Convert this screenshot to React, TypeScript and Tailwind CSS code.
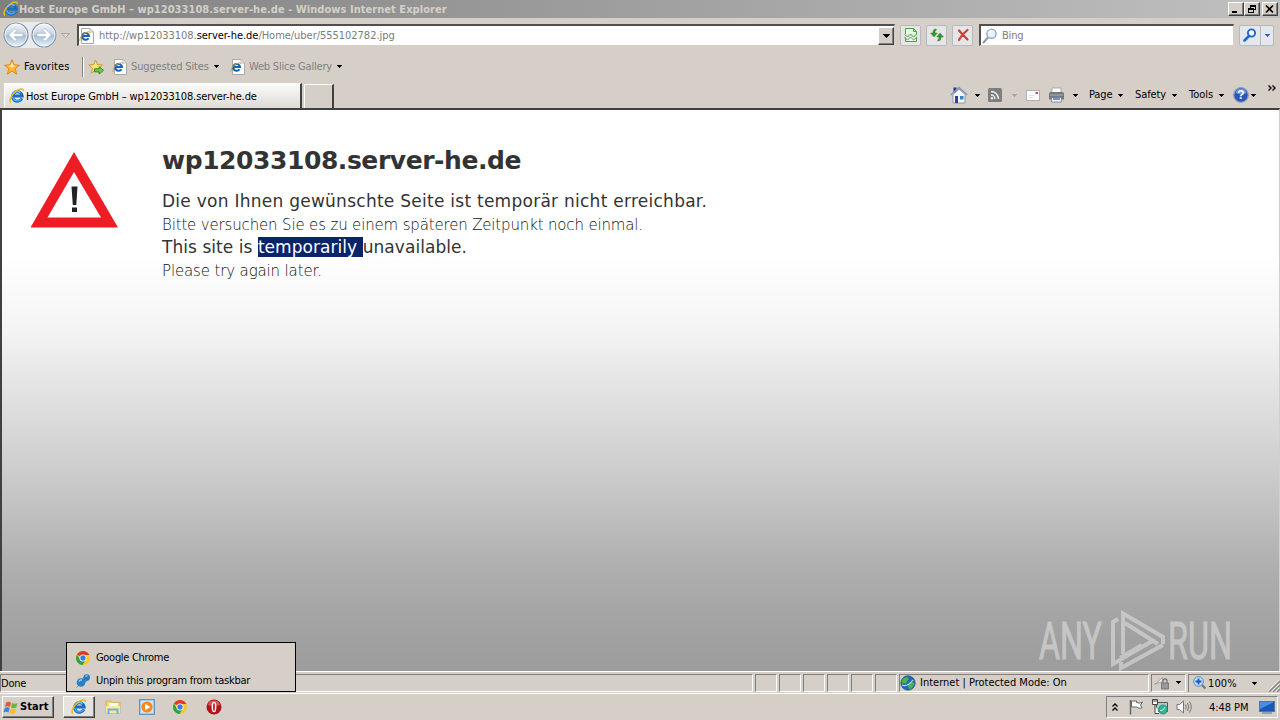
import { ReactNode } from 'react';

const ui = 'font-["DejaVu_Sans_Condensed","DejaVu_Sans",sans-serif] [font-stretch:condensed]';

interface IconProps {
  className?: string;
}

function IeLogo({ className = 'w-4 h-4' }: IconProps) {
  return (
    <svg viewBox="0 0 16 16" className={className} fill="none">
      <path d="M12.900 10.200A4.800 4.800 0 1 1 13.200 8H4.500" stroke="#1c6cc6" strokeWidth="3" />
      <path d="M12.300 10.600A4.800 4.800 0 0 1 3.600 9" stroke="#3fabf0" strokeWidth="1.500" />
      <path d="M4.200 5.800A4.800 4.800 0 0 1 11.500 4.600" stroke="#62c4f8" strokeWidth="1.500" />
      <path d="M2 14.500C-.6 13.500 2.200 6.500 7.200 3c3.800-2.600 7.600-2.900 7.200.2" stroke="#e8bb20" strokeWidth="1.500" />
    </svg>
  );
}

function IePage() {
  return (
    <svg viewBox="0 0 16 16" className="w-4 h-4 shrink-0" fill="none">
      <path d="M2.500.5h8.500l3.500 3.500v11.500h-12z" fill="#fff" stroke="#a9a9a9" />
      <path d="M11 .5V4h3.500" stroke="#bbb" />
      <path d="M9.500 10.200A3.400 3.400 0 1 1 10 8H4" stroke="#1b62b5" strokeWidth="2.100" />
      <path d="M1 13C0 11 3 6.500 6 5c3-1.600 5-1.700 5 0" stroke="#d9ac27" />
    </svg>
  );
}

function Chrome({ className = 'w-4 h-4' }: IconProps) {
  return (
    <svg viewBox="0 0 16 16" className={className}>
      <circle cx="8" cy="8" r="7" fill="#fbc91f" />
      <path d="M8 8 1.940 4.500A7 7 0 0 1 14.060 4.500L14.400 5H8z" fill="#e0392b" />
      <path d="M1.940 4.500A7 7 0 0 0 7.500 15L11 9.500 8 8 5 9.500z" fill="#2ba24c" />
      <circle cx="8" cy="8" r="3.500" fill="#fff" />
      <circle cx="8" cy="8" r="2.700" fill="#3b7de8" />
    </svg>
  );
}

function Caret({ className = 'text-black' }: IconProps) {
  return (
    <svg viewBox="0 0 5 3" className={`w-[5px] h-[3px] shrink-0 ${className}`} shapeRendering="crispEdges">
      <path d="M0 0h5v1H0zM1 1h3v1H1zM2 2h1v1H2z" fill="currentColor" />
    </svg>
  );
}

function Star() {
  return (
    <svg viewBox="0 0 16 16" className="w-4 h-4 shrink-0">
      <path d="m8 .8 2.100 5 5.300.4-4.100 3.500 1.300 5.300L8 12.200 3.400 15l1.300-5.300L.6 6.200l5.300-.4z" fill="#fdb827" stroke="#d9801a" strokeWidth=".9" />
      <path d="m8 3 1.200 3.600 3 .4L8 8.500 4 7l2.700-.5z" fill="#fff0a0" />
    </svg>
  );
}

function StarAdd() {
  return (
    <svg viewBox="0 0 16 16" className="w-4 h-4 shrink-0">
      <path d="m7.500 1 2 4.500 5 .5-3.800 3.300 1 5-4.200-2.700L3.400 14l1.100-4.700L.8 6l4.900-.5z" fill="#ffe274" stroke="#c6962b" strokeWidth=".9" />
      <path d="M6.500 9.800h4.700V7.700l4.300 3.600-4.300 3.700v-2.200H6.500z" fill="#6fd046" stroke="#238522" strokeWidth=".9" />
    </svg>
  );
}

function NavCircle({ forward }: { forward?: boolean }) {
  return (
    <svg viewBox="0 0 26 26" className="w-[26px] h-[26px] shrink-0">
      <defs>
        <linearGradient id={forward ? 'navF' : 'navB'} x1="0" y1="0" x2="0" y2="1">
          <stop offset="0" stopColor="#f4f7fa" />
          <stop offset=".48" stopColor="#c4d2e2" />
          <stop offset=".52" stopColor="#a9bed6" />
          <stop offset="1" stopColor="#e6f4fd" />
        </linearGradient>
      </defs>
      <circle cx="13" cy="13" r="12" fill={`url(#${forward ? 'navF' : 'navB'})`} stroke="#8493a5" strokeWidth="1.200" />
      <circle cx="13" cy="13" r="10.900" fill="none" stroke="#fff" strokeOpacity=".7" />
      <path
        d="M5.500 13l6.500-6.500 2 2-2.700 2.800h8.700v3.400h-8.700l2.700 2.800-2 2z"
        fill="#fff"
        stroke="#8fa5bd"
        strokeWidth=".6"
        transform={forward ? 'matrix(-1 0 0 1 26 0)' : undefined}
      />
    </svg>
  );
}

function ToolButton({ children }: { children: ReactNode }) {
  return (
    <div className="w-[21px] h-[21px] shrink-0 flex items-center justify-center bg-[#e6e6e6] border border-[#b4bac2] rounded-[2px]">
      {children}
    </div>
  );
}

function WinButton({ children }: { children: ReactNode }) {
  return (
    <div className="w-4 h-[14px] bg-[#d5cfc8] border border-t-white border-l-white border-r-[#404040] border-b-[#404040] shadow-[inset_-1px_-1px_0_#808080] flex items-center justify-center">
      <svg viewBox="0 0 12 10" className="w-3 h-[10px]" fill="none" stroke="#000" shapeRendering="crispEdges">
        {children}
      </svg>
    </div>
  );
}

function TitleBar() {
  return (
    <div className="h-[18px] flex items-center bg-linear-to-r from-[#808080] to-[#c0c0c0] pl-[3px] pr-[2px]">
      <IeLogo className="w-4 h-4 mb-px" />
      <span className="font-['DejaVu_Sans_Condensed','DejaVu_Sans',sans-serif] font-bold text-[11px] leading-[18px] text-[#d4d0c8] tracking-[0.05px] pt-px whitespace-nowrap">
        Host Europe GmbH – wp12033108.server-he.de - Windows Internet Explorer
      </span>
      <div className="ml-auto flex">
        <WinButton><path d="M2 7.500h5M2 8.500h5" /></WinButton>
        <WinButton>
          <path d="M4 1h6M4 2h6M9.500 1v5M4.500 1v3M8 5.500h2M2 4h6M2 5h6M2.500 4v5M7.500 4v5M2 8.500h6" />
        </WinButton>
        <div className="ml-[2px]">
          <WinButton><path d="M2 1.500l7 7M9 1.500l-7 7" strokeWidth="1.600" shapeRendering="auto" /></WinButton>
        </div>
      </div>
    </div>
  );
}

function AddressRow() {
  return (
    <div className="h-[34px] flex items-center pl-[3px] pr-[5px]">
      <div className="flex gap-[2px] rounded-full bg-[#e9ecef]">
        <NavCircle />
        <NavCircle forward />
      </div>
      <svg viewBox="0 0 9 5" className="w-[9px] h-[5px] ml-[4px] mr-[7px] shrink-0">
        <path d="M.5.5h8l-4 4z" fill="#ddd9d2" stroke="#aaa69f" />
      </svg>
      <div className="w-[818px] h-[22px] shrink-0 flex items-center bg-white border-t-2 border-l-2 border-t-[#505050] border-l-[#505050] border-b border-r border-b-[#d4d0c8] border-r-[#d4d0c8]">
        <IePage />
        <span className={`${ui} text-[11px] text-[#7c7c7c] ml-[4px] pt-[2px] tracking-[-0.03px] whitespace-nowrap`}>
          http://wp12033108.<span className="text-black">server-he.de</span>/Home/uber/555102782.jpg
        </span>
        <div className="ml-auto w-4 h-[18px] bg-[#d5cfc8] border border-t-white border-l-white border-r-[#404040] border-b-[#404040] shadow-[inset_-1px_-1px_0_#808080] flex items-center justify-center">
          <svg viewBox="0 0 7 4" className="w-[7px] h-1" shapeRendering="crispEdges">
            <path d="M0 0h7v1H0zM1 1h5v1H1zM2 2h3v1H2zM3 3h1v1H3z" />
          </svg>
        </div>
      </div>
      <div className="flex gap-[5px] ml-[5px]">
        <ToolButton>
          <svg viewBox="0 0 16 16" className="w-4 h-4" fill="none" stroke="#46a046">
            <path d="M2.500 7V1.500h8l3 3V7M10.500 1.500v3h3M2.500 10.500v4h11v-4" fill="#f0f8ee" />
            <path d="m1.500 7.500 3 2.500 3-3 3 3 3.500-3M1.500 10.500l3 2.500 3-3 3 3 3.500-3" />
          </svg>
        </ToolButton>
        <ToolButton>
          <svg viewBox="0 0 16 16" className="w-4 h-4" fill="#319a2c" stroke="#1d7a1d" strokeWidth=".4">
            <path d="M7 2C4.500 2 4 3.500 4 6H1.500L5 10l3.300-4H6C6 4.500 6 3.500 7.500 3z" />
            <path d="M9 14c2.500 0 3-1.500 3-4h2.500L11 6 7.700 10H10c0 1.500 0 2.500-1.500 3z" />
          </svg>
        </ToolButton>
        <ToolButton>
          <svg viewBox="0 0 16 16" className="w-4 h-4" fill="none" strokeLinecap="round">
            <path d="M4 3.500c2 2.500 5 5 8.500 9M12.500 3C9 6 6 9 4 13" stroke="#c8413d" strokeWidth="2.200" />
          </svg>
        </ToolButton>
      </div>
      <div className="w-[255px] h-[22px] ml-[6px] shrink-0 flex items-center bg-white border-t-2 border-l-2 border-t-[#505050] border-l-[#505050] border-b border-r border-b-[#d4d0c8] border-r-[#d4d0c8]">
        <svg viewBox="0 0 16 16" className="w-4 h-4 ml-px" fill="none">
          <path d="m6 9.500-4.500 5" stroke="#8e9aa6" strokeWidth="2" strokeLinecap="round" />
          <circle cx="9.500" cy="5.700" r="4.600" fill="#e4f3fc" stroke="#92aabd" strokeWidth="1.400" />
          <path d="M7 5.500c.5-2 2-2.500 3.500-2.300" stroke="#fff" strokeWidth="1.300" />
        </svg>
        <span className={`${ui} text-[11px] text-[#7c7c7c] ml-[4px] pt-[2px] tracking-[-0.2px]`}>Bing</span>
      </div>
      <div className="w-[35px] h-[21px] ml-[5px] shrink-0 flex bg-[#e4e7ec] border border-[#b4bac2] rounded-[2px]">
        <div className="flex-1 flex items-center justify-center">
          <svg viewBox="0 0 14 14" className="w-[14px] h-[14px]" fill="none" stroke="#2366c9">
            <path d="m5.500 8.500-4 4" strokeWidth="2.500" strokeLinecap="round" />
            <circle cx="8.500" cy="5" r="3.600" strokeWidth="1.900" fill="#f2f8ff" />
          </svg>
        </div>
        <div className="w-[13px] border-l border-[#b4bac2] flex items-center justify-center">
          <Caret className="text-[#2366c9]" />
        </div>
      </div>
    </div>
  );
}

function FavoritesRow() {
  return (
    <div className={`${ui} h-[29px] flex items-center pl-1 text-[11px] whitespace-nowrap`}>
      <Star />
      <span className="ml-[4px] w-[46px] pt-px tracking-[0.1px]">Favorites</span>
      <div className="ml-[12px] w-[2px] h-5 border-l border-[#808080] border-r border-r-white" />
      <div className="ml-[4px]"><StarAdd /></div>
      <div className="ml-[8px]"><IePage /></div>
      <span className="ml-[3px] w-[78px] pt-px tracking-[-0.15px] text-[#808080]">Suggested Sites</span>
      <div className="ml-[5px]"><Caret /></div>
      <div className="ml-[11px]"><IePage /></div>
      <span className="ml-[3px] w-[83px] pt-px tracking-[-0.2px] text-[#808080]">Web Slice Gallery</span>
      <div className="ml-[5px]"><Caret /></div>
    </div>
  );
}

function CommandBar() {
  return (
    <div className={`${ui} ml-auto mb-[3px] h-5 flex items-center text-[11px] whitespace-nowrap`}>
      <svg viewBox="0 0 18 18" className="w-[18px] h-[18px]">
        <path d="M3.500 1.500h3v5h-3z" fill="#27348b" />
        <path d="M3 8.500 9 3l6 5.500V17H3z" fill="#f6f7fb" stroke="#7788aa" strokeWidth=".8" />
        <path d="M.8 9 9 1.500 17.200 9" fill="none" stroke="#8297bd" strokeWidth="1.600" />
        <path d="M5 10h3v7H5z" fill="#2d4390" />
        <path d="M10 10h3.500v3.500H10z" fill="#3288bd" />
      </svg>
      <div className="ml-[7px]"><Caret /></div>
      <svg viewBox="0 0 14 14" className="w-[14px] h-[14px] ml-[8px]" fill="none">
        <rect width="14" height="14" rx="1.500" fill="#7e7e7e" />
        <path d="M3 7a4 4 0 0 1 4 4M3 3.500A7.500 7.500 0 0 1 10.500 11" stroke="#eee" strokeWidth="1.500" />
        <circle cx="3.900" cy="10.200" r="1.200" fill="#eee" />
      </svg>
      <div className="ml-[10px]"><Caret className="text-[#aaa69f]" /></div>
      <svg viewBox="0 0 14 11" className="w-[14px] h-[11px] ml-[9px]">
        <rect x=".5" y=".5" width="13" height="10" fill="#fdfdfd" stroke="#b7aeb4" />
        <path d="M9.500 2h2.500v2H9.500z" fill="#c34a68" />
        <path d="M3 5.500h5M3 7.500h4" stroke="#ddd" />
      </svg>
      <svg viewBox="0 0 17 16" className="w-[17px] h-4 ml-[8px]">
        <path d="M4 1h9v6H4z" fill="#fff" stroke="#999" strokeWidth=".8" />
        <path d="M1 6.500Q1 5 3 5h11q2 0 2 1.500v6H1z" fill="#74777d" />
        <path d="M2 8h13" stroke="#aeb2b8" />
        <path d="M3.500 10.500h10V15h-10z" fill="#eef4fc" stroke="#787c86" strokeWidth=".8" />
        <path d="M5 12h7" stroke="#3a76c6" strokeWidth="1.500" />
      </svg>
      <div className="ml-[8px]"><Caret /></div>
      <span className="ml-[11px] w-[24px] tracking-[-0.1px]">Page</span>
      <div className="ml-[5px]"><Caret /></div>
      <span className="ml-[12px] w-[32px] tracking-[-0.1px]">Safety</span>
      <div className="ml-[5px]"><Caret /></div>
      <span className="ml-[12px] w-[25px]">Tools</span>
      <div className="ml-[5px]"><Caret /></div>
      <svg viewBox="0 0 16 16" className="w-4 h-4 ml-[9px]">
        <circle cx="8" cy="8" r="7.300" fill="#2b56b8" stroke="#8d9dc2" strokeWidth="1.300" />
        <path d="M2.500 6a5.700 5.700 0 0 1 11 0Q8 8.500 2.500 6z" fill="#6d93df" />
        <text x="8" y="12.300" textAnchor="middle" fontSize="12" fontWeight="700" fontFamily="Liberation Sans, sans-serif" fill="#fff">?</text>
      </svg>
      <div className="ml-[2px]"><Caret /></div>
      <svg viewBox="0 0 8 6" className="w-2 h-[6px] ml-[12px] mr-[4px] mb-[15px]" fill="none" stroke="#000" strokeWidth="1.400">
        <path d="m.5.5 2.500 2.500L.5 5.500M4.500.5 7 3 4.500 5.500" />
      </svg>
    </div>
  );
}

function TabRow() {
  return (
    <div className="h-[27px] flex items-end pl-1">
      <div className="w-[298px] h-[25px] flex items-center border-t border-l border-white border-r-2 border-r-[#404040] bg-linear-to-b from-[#fbfbfa] to-[#dedbd5] pl-1">
        <IeLogo />
        <span className={`${ui} text-[11px] ml-[1px] pt-[2px] tracking-[-0.12px] whitespace-nowrap`}>Host Europe GmbH – wp12033108.server-he.de</span>
      </div>
      <div className="w-[30px] h-[24px] ml-[2px] border-t border-l border-white border-r-2 border-r-[#404040]" />
      <CommandBar />
    </div>
  );
}

function Watermark() {
  return (
    <svg viewBox="0 0 220 76" className="absolute left-[1034px] top-[500px] w-[220px] h-[76px] opacity-60 overflow-visible" fill="none" stroke="#dedede" strokeWidth="4">
      <g fontSize="52" fontFamily="Roboto, sans-serif" fill="#dedede" strokeWidth="1">
        <text x="3" y="49" textLength="63" lengthAdjust="spacingAndGlyphs">ANY</text>
        <text x="132" y="49" textLength="64" lengthAdjust="spacingAndGlyphs">RUN</text>
      </g>
      <path d="M82 9 77 12v42l41-24M106 35 84 48M87 44V3.500L127 27v7M89 13l33 21M85 52v6l42-23" />
    </svg>
  );
}

function Page() {
  return (
    <div className="relative h-[563px] border-t-2 border-l-2 border-[#404040] border-r border-r-[#d4d0c8] bg-[linear-gradient(to_bottom,#fff_145px,#f4f4f4_219px,#e1e1e1_286px,#cfcfcf_352px,#c0c0c0_402px,#b0b0b0_452px,#a5a5a5_502px,#9c9c9c_561px)]">
      <div className="flex pt-[40px] pl-[27px] text-[#333] font-['DejaVu_Sans',sans-serif] whitespace-nowrap">
        <svg viewBox="0 0 90 80" className="w-[90px] h-20 shrink-0">
          <path d="M45 2 89 77.500H1.500z" fill="#ee1c24" />
          <path d="M45 22 72 67.500H18.500z" fill="#fff" />
          <path d="M42.500 36.500h6L47.300 55h-3.500zM43 57.500h5v4.500h-5z" fill="#222" />
        </svg>
        <div className="ml-[43px]">
          <h1 className="font-bold text-[25px] leading-[30px] -mt-[4px] tracking-[-0.43px]">wp12033108.server-he.de</h1>
          <p className="mt-[14px] text-[17px] leading-[23px] tracking-[0.26px]">Die von Ihnen gewünschte Seite ist temporär nicht erreichbar.</p>
          <p className="mt-px -mb-px text-[15px] leading-[23px] font-extralight text-[#111] tracking-[-0.16px]">Bitte versuchen Sie es zu einem späteren Zeitpunkt noch einmal.</p>
          <p className="text-[17px] leading-[23px] tracking-[0.05px]">
            This site is <span className="bg-[#0a246a] text-white">temporarily </span>unavailable.
          </p>
          <p className="mt-px text-[15px] leading-[23px] font-extralight text-[#111] tracking-[-0.14px]">Please try again later.</p>
        </div>
      </div>
      <Watermark />
    </div>
  );
}

const panel = 'h-[18px] border-t border-l border-[#808080] border-r border-b border-r-white border-b-white';

function StatusBar() {
  return (
    <div className={`${ui} h-[23px] flex items-center gap-[2px] border-t border-b border-white text-[11px] whitespace-nowrap`}>
      <div className={`${panel} w-[753px] leading-[17px] tracking-[-0.2px]`}>Done</div>
      {[0, 1, 2, 3, 4, 5].map((n) => (
        <div key={n} className={`${panel} w-[22px]`} />
      ))}
      <div className={`${panel} w-[250px] flex items-center`}>
        <svg viewBox="0 0 16 16" className="w-4 h-4">
          <circle cx="8" cy="8" r="7.200" fill="#2467b8" stroke="#244f82" strokeWidth=".7" />
          <path d="M3 3.500 7 2l2 2-2 2-1 3-2-1-2 1Q1.500 5.500 3 3.500zM9 8l4-1 1.500 2-2.500 4-3 1.500L8 11z" fill="#45b552" />
          <path d="M2 10c4 2 8-1 11-5" stroke="#b5e2f7" strokeWidth="1.200" fill="none" />
        </svg>
        <span className="ml-[4px] pt-[2px]">Internet | Protected Mode: On</span>
      </div>
      <div className={`${panel} w-[35px] flex items-center justify-end pr-1`}>
        <svg viewBox="0 0 16 14" className="w-4 h-[14px] mr-[6px]">
          <path d="M.5 8C5 7 5 3 9 1.500L8 6z" fill="#eee" stroke="#999" strokeWidth=".8" />
          <path d="M9 7V5q0-2 2-2t2 2v2" fill="none" stroke="#777" strokeWidth="1.400" />
          <path d="M7.500 7h7v6h-7z" fill="#999" stroke="#666" strokeWidth=".7" />
        </svg>
        <Caret />
      </div>
      <div className="h-[18px] flex-1 flex items-center border-t border-l border-[#808080] pl-[4px]">
        <svg viewBox="0 0 14 14" className="w-[14px] h-[14px]">
          <path d="m8 8 4.500 4.500" stroke="#777" strokeWidth="2.200" />
          <circle cx="5.500" cy="5.500" r="4.800" fill="#c9e4fb" stroke="#4b83c4" />
          <path d="M5.500 2.500v6M2.500 5.500h6" stroke="#1556b8" strokeWidth="1.800" />
        </svg>
        <span className="ml-[1px] w-[30px] pt-[2px] tracking-[0.1px]">100%</span>
        <div className="ml-[14px]"><Caret /></div>
        <svg viewBox="0 0 12 12" className="w-3 h-3 ml-auto mt-[5px]" strokeWidth="1.300">
          <path d="M1 12 12 1M5 12l7-7M9 12l3-3" stroke="#808080" />
          <path d="M0 11 11 0M4 11l7-7M8 11l3-3" stroke="#fff" strokeWidth=".7" />
        </svg>
      </div>
    </div>
  );
}

function Taskbar() {
  return (
    <div className={`${ui} h-[26px] flex items-center pl-[2px] pr-[2px] text-[11px] whitespace-nowrap`}>
      <div className="w-[52px] h-[22px] flex items-center border border-t-white border-l-white border-r-[#404040] border-b-[#404040] shadow-[inset_-1px_-1px_0_#808080]">
        <svg viewBox="0 0 16 15" className="w-4 h-[15px] shrink-0">
          <path d="M3 2.500q2.500-1.500 5 0L7 7Q4.500 5.500 2 7z" fill="#e8582a" />
          <path d="M9 3q2.500 1.300 5.500 0L13.300 7.500q-3 1.300-5.300 0z" fill="#6fb23c" />
          <path d="M1.700 8q2.500-1.500 5 0l-1.200 4.500Q3 11 .5 12.500z" fill="#3c86d6" />
          <path d="M7.700 8.500q2.500 1.300 5.500 0L12 13q-3 1.300-5.500 0z" fill="#f5bd2b" />
        </svg>
        <span className="ml-[1px] pt-px font-bold tracking-[0.1px]">Start</span>
      </div>
      <div className="ml-[9px] w-[32px] h-[22px] flex items-center justify-center bg-[#e6e3de] border border-t-white border-l-white border-r-[#404040] border-b-[#404040] shadow-[inset_-1px_-1px_0_#808080]">
        <IeLogo />
      </div>
      <svg viewBox="0 0 16 16" className="w-4 h-4 ml-[10px]">
        <path d="M1 2h5l1 1.500h8V14H1z" fill="#f4d573" stroke="#cba23f" strokeWidth=".7" />
        <path d="M4 4h9v5H4z" fill="#fffbe4" />
        <path d="M1 7h14v7H1z" fill="#fae99f" />
        <path d="M3.500 15V10.500h9V15" fill="none" stroke="#6db2da" strokeWidth="2" />
      </svg>
      <svg viewBox="0 0 16 16" className="w-4 h-4 ml-[18px]">
        <rect x=".7" y=".7" width="14.600" height="14.600" fill="#cfe5f6" stroke="#5e94c2" strokeWidth="1.300" />
        <circle cx="8" cy="8" r="5.600" fill="#f28a1c" />
        <path d="M6.200 4.800 11.300 8l-5.100 3.200z" fill="#fff" />
      </svg>
      <div className="ml-[17px]"><Chrome /></div>
      <svg viewBox="0 0 16 16" className="w-4 h-4 ml-[18px]">
        <circle cx="8" cy="8" r="7.500" fill="#b3131b" />
        <path d="M2 6a6.300 6.300 0 0 1 12 0Q8 8 2 6z" fill="#d8555b" />
        <ellipse cx="8" cy="8" rx="2.400" ry="5.300" fill="#fff" />
        <ellipse cx="8" cy="8" rx=".9" ry="4" fill="#b3131b" />
      </svg>
      <div className="ml-auto w-[172px] h-[22px] flex items-center border-t border-l border-[#808080] border-r border-b border-r-white border-b-white">
        <svg viewBox="0 0 6 8" className="w-[6px] h-2 ml-[5px]" fill="none" stroke="#000" strokeWidth="1.300">
          <path d="m.5 3.500 2.500-2.500 2.500 2.500M.5 7.500 3 5l2.500 2.500" />
        </svg>
        <svg viewBox="0 0 16 16" className="w-4 h-4 ml-[10px]" fill="#fff" stroke="#666">
          <path d="M2.500 1v14.500" strokeWidth="1.500" />
          <path d="M3.500 2h5v1.500q3 1.500 6-.5l-2 3 1.500 3q-3 1-5.500-1h-5z" />
        </svg>
        <svg viewBox="0 0 16 16" className="w-4 h-4 ml-[8px]">
          <path d="M4.500 3.500h11v9h-11z" fill="#a9cfc8" stroke="#555" />
          <path d="M.5.500h5v5h-5zM3 5.500v9h4" fill="#fff" stroke="#444" />
          <path d="M2 .5v2.500M4 .5v2.500" stroke="#444" />
          <circle cx="11" cy="10.500" r="4.500" fill="#32b58e" stroke="#1b7f75" strokeWidth=".7" />
          <path d="M8 11.500c3 0 4-1 5-3.500" fill="none" stroke="#d9f7ed" />
        </svg>
        <svg viewBox="0 0 16 16" className="w-4 h-4 ml-[8px]" fill="none" stroke="#777">
          <path d="M1 5.500h2.500L7.500 2v12l-4-3.500H1z" fill="#fff" />
          <path d="M9.500 5.500q1.500 2.500 0 5M11.500 4q2.500 4 0 8M13.500 2.500q3.500 5.500 0 11" />
        </svg>
        <span className="ml-[17px] w-[40px] pt-[2px] tracking-[-0.05px]">4:48 PM</span>
        <svg viewBox="0 0 16 13" className="w-4 h-[13px] ml-[10px]">
          <rect x=".5" y=".5" width="15" height="10" fill="#1759b7" stroke="#5a7595" />
          <path d="M1 1h14L1 8z" fill="#4b8de0" />
          <path d="M3 12h10" stroke="#7a8fa6" strokeWidth="1.500" />
        </svg>
      </div>
    </div>
  );
}

function JumpMenu() {
  return (
    <div className={`${ui} absolute left-[66px] top-[642px] w-[230px] h-[50px] bg-[#d5cfc8] border border-black pt-[3px] text-[11px] whitespace-nowrap`}>
      <div className="h-[23px] flex items-center pl-2">
        <Chrome />
        <span className="ml-[5px] pt-px tracking-[-0.3px]">Google Chrome</span>
      </div>
      <div className="h-[23px] flex items-center pl-2">
        <svg viewBox="0 0 16 16" className="w-4 h-4">
          <path d="m5 11-3.500 3.500" stroke="#888" />
          <path d="m6 7 4-4 3.500 3.500-4 4z" fill="#4396d1" />
          <circle cx="6" cy="9.500" r="4.300" fill="#2b7fc0" />
          <circle cx="11.700" cy="4.500" r="3.200" fill="#2878bd" />
          <path d="M4 8.500q1-2 3-1.500M10.500 3.500q1-1 2-.5" stroke="#a9dcf8" strokeWidth="1.300" fill="none" />
        </svg>
        <span className="ml-[5px] pt-px tracking-[-0.25px]">Unpin this program from taskbar</span>
      </div>
    </div>
  );
}

export default function App() {
  return (
    <div className="relative w-[1280px] h-[720px] overflow-hidden bg-[#d5cfc8] text-black">
      <TitleBar />
      <AddressRow />
      <FavoritesRow />
      <TabRow />
      <Page />
      <StatusBar />
      <Taskbar />
      <JumpMenu />
    </div>
  );
}
